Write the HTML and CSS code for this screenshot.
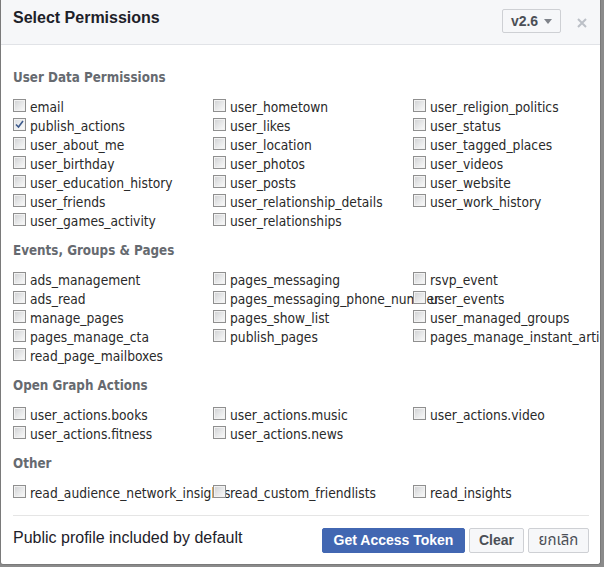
FILE: index.html
```html
<!DOCTYPE html>
<html>
<head>
<meta charset="utf-8">
<title>Select Permissions</title>
<link rel="stylesheet" href="styles.css">
</head>
<body>
<div class="dialog">
  <div class="header">
    <div class="title">Select Permissions</div>
    <div class="version">v2.6<span class="caret"></span></div>
    <svg class="close" width="10" height="10" viewBox="0 0 10 10"><path d="M1 1L9 9M9 1L1 9" stroke="#bcc0c7" stroke-width="2" fill="none"/></svg>
  </div>
  <div class="content">
    <div class="section">
      <div class="heading">User Data Permissions</div>
      <div class="grid">
        <label class="item"><span class="cb"></span><span class="txt">email</span></label>
        <label class="item"><span class="cb"></span><span class="txt">user_hometown</span></label>
        <label class="item"><span class="cb"></span><span class="txt">user_religion_politics</span></label>
        <label class="item"><span class="cb checked"><svg width="9" height="9" viewBox="0 0 9 9"><path d="M1 4.5L3.5 7L8 1" stroke="#3d5a8c" stroke-width="1.6" fill="none"/></svg></span><span class="txt">publish_actions</span></label>
        <label class="item"><span class="cb"></span><span class="txt">user_likes</span></label>
        <label class="item"><span class="cb"></span><span class="txt">user_status</span></label>
        <label class="item"><span class="cb"></span><span class="txt">user_about_me</span></label>
        <label class="item"><span class="cb"></span><span class="txt">user_location</span></label>
        <label class="item"><span class="cb"></span><span class="txt">user_tagged_places</span></label>
        <label class="item"><span class="cb"></span><span class="txt">user_birthday</span></label>
        <label class="item"><span class="cb"></span><span class="txt">user_photos</span></label>
        <label class="item"><span class="cb"></span><span class="txt">user_videos</span></label>
        <label class="item"><span class="cb"></span><span class="txt">user_education_history</span></label>
        <label class="item"><span class="cb"></span><span class="txt">user_posts</span></label>
        <label class="item"><span class="cb"></span><span class="txt">user_website</span></label>
        <label class="item"><span class="cb"></span><span class="txt">user_friends</span></label>
        <label class="item"><span class="cb"></span><span class="txt">user_relationship_details</span></label>
        <label class="item"><span class="cb"></span><span class="txt">user_work_history</span></label>
        <label class="item"><span class="cb"></span><span class="txt">user_games_activity</span></label>
        <label class="item"><span class="cb"></span><span class="txt">user_relationships</span></label>
        <div class="empty"></div>
      </div>
    </div>
    <div class="section">
      <div class="heading">Events, Groups &amp; Pages</div>
      <div class="grid">
        <label class="item"><span class="cb"></span><span class="txt">ads_management</span></label>
        <label class="item"><span class="cb"></span><span class="txt">pages_messaging</span></label>
        <label class="item"><span class="cb"></span><span class="txt">rsvp_event</span></label>
        <label class="item"><span class="cb"></span><span class="txt">ads_read</span></label>
        <label class="item"><span class="cb"></span><span class="txt">pages_messaging_phone_number</span></label>
        <label class="item"><span class="cb"></span><span class="txt">user_events</span></label>
        <label class="item"><span class="cb"></span><span class="txt">manage_pages</span></label>
        <label class="item"><span class="cb"></span><span class="txt">pages_show_list</span></label>
        <label class="item"><span class="cb"></span><span class="txt">user_managed_groups</span></label>
        <label class="item"><span class="cb"></span><span class="txt">pages_manage_cta</span></label>
        <label class="item"><span class="cb"></span><span class="txt">publish_pages</span></label>
        <label class="item"><span class="cb"></span><span class="txt">pages_manage_instant_articles</span></label>
        <label class="item"><span class="cb"></span><span class="txt">read_page_mailboxes</span></label>
        <div class="empty"></div>
        <div class="empty"></div>
      </div>
    </div>
    <div class="section">
      <div class="heading">Open Graph Actions</div>
      <div class="grid">
        <label class="item"><span class="cb"></span><span class="txt">user_actions.books</span></label>
        <label class="item"><span class="cb"></span><span class="txt">user_actions.music</span></label>
        <label class="item"><span class="cb"></span><span class="txt">user_actions.video</span></label>
        <label class="item"><span class="cb"></span><span class="txt">user_actions.fitness</span></label>
        <label class="item"><span class="cb"></span><span class="txt">user_actions.news</span></label>
        <div class="empty"></div>
      </div>
    </div>
    <div class="section">
      <div class="heading">Other</div>
      <div class="grid">
        <label class="item"><span class="cb"></span><span class="txt">read_audience_network_insights</span></label>
        <label class="item"><span class="cb"></span><span class="txt">read_custom_friendlists</span></label>
        <label class="item"><span class="cb"></span><span class="txt">read_insights</span></label>
      </div>
    </div>
  </div>
  <div class="footer">
    <div class="note">Public profile included by default</div>
    <div class="buttons">
      <button class="btn primary">Get Access Token</button>
      <button class="btn clear">Clear</button>
      <button class="btn thai">ยกเลิก</button>
    </div>
  </div>
</div>
</body>
</html>
```
FILE: styles.css
```css
html, body {
  margin: 0;
  padding: 0;
}
body {
  background: #8b8b8b;
  width: 604px;
  height: 567px;
  overflow: hidden;
}
.dialog {
  width: 599px;
  background: #fff;
  border: 1px solid #7a7a7a;
  border-top: none;
  border-radius: 0 0 3px 3px;
  overflow: hidden;
}
.header {
  height: 44px;
  background: #f6f7f9;
  border-bottom: 1px solid #e1e3e7;
  display: flex;
  align-items: flex-start;
  padding: 0 12px 0 12px;
}
.title {
  font-family: "Liberation Sans", Arial, sans-serif;
  font-weight: bold;
  font-size: 16px;
  line-height: 20px;
  color: #1d2129;
  margin-top: 8px;
}
.version {
  margin-left: auto;
  margin-top: 9px;
  height: 22px;
  width: 57px;
  box-sizing: content-box;
  border: 1px solid #ced0d4;
  border-radius: 2px;
  background: #f6f7f9;
  font-family: "Liberation Sans", Arial, sans-serif;
  font-weight: bold;
  font-size: 14px;
  line-height: 22px;
  color: #4b4f56;
  display: flex;
  align-items: center;
  justify-content: center;
}
.caret {
  display: inline-block;
  width: 0;
  height: 0;
  border-left: 4px solid transparent;
  border-right: 4px solid transparent;
  border-top: 5px solid #7f838a;
  margin-left: 6px;
  margin-top: 1px;
}
.close {
  margin-top: 18px;
  margin-left: 16px;
  margin-right: 1px;
}
.content {
  padding: 24px 0 0 12px;
}
.section + .section {
  margin-top: 11px;
}
.heading {
  font-family: "DejaVu Sans Condensed", "DejaVu Sans", sans-serif;
  font-stretch: condensed;
  font-weight: bold;
  font-size: 13.3px;
  line-height: 18px;
  color: #666a70;
  margin-bottom: 11px;
}
.grid {
  display: grid;
  grid-template-columns: repeat(3, 200px);
  grid-auto-rows: 19px;
}
.item {
  display: flex;
  align-items: flex-start;
  white-space: nowrap;
  font-family: "DejaVu Sans Condensed", "DejaVu Sans", sans-serif;
  font-stretch: condensed;
  font-size: 13.7px;
  line-height: 19px;
  color: #2a2a2a;
}
.cb {
  flex: none;
  width: 11px;
  height: 11px;
  margin-top: 1px;
  border: 1px solid #8f8f8f;
  background: linear-gradient(135deg, #cfd0d2 0%, #e6e7e8 50%, #fbfbfb 100%);
  box-shadow: inset 0 0 0 1px #f2f2f2;
  display: flex;
  align-items: center;
  justify-content: center;
}
.cb.checked {
  background: linear-gradient(135deg, #d8dbe0 0%, #eceef0 50%, #fdfdfd 100%);
}
.txt {
  margin-left: 4px;
}
.footer {
  margin: 12px 11px 0 12px;
  border-top: 1px solid #e5e5e5;
  padding: 12px 0 11px 0;
  display: flex;
  align-items: flex-start;
}
.note {
  font-family: "Liberation Sans", Arial, sans-serif;
  font-size: 16px;
  line-height: 20px;
  color: #1d2129;
}
.buttons {
  margin-left: auto;
  display: flex;
  gap: 4px;
}
.btn {
  height: 25px;
  padding: 0;
  border: 1px solid #ced0d4;
  border-radius: 2px;
  background: #f6f7f9;
  font-family: "Liberation Sans", Arial, sans-serif;
  font-weight: bold;
  font-size: 14px;
  line-height: 23px;
  color: #4b4f56;
}
.btn.primary {
  background: #4267b2;
  border-color: #4267b2;
  color: #fff;
  width: 143px;
}
.btn.clear {
  width: 55px;
}
.btn.thai {
  font-weight: normal;
  font-family: "Noto Sans Thai", "Tahoma", "DejaVu Sans", sans-serif;
  font-size: 15px;
  width: 61px;
}
```
